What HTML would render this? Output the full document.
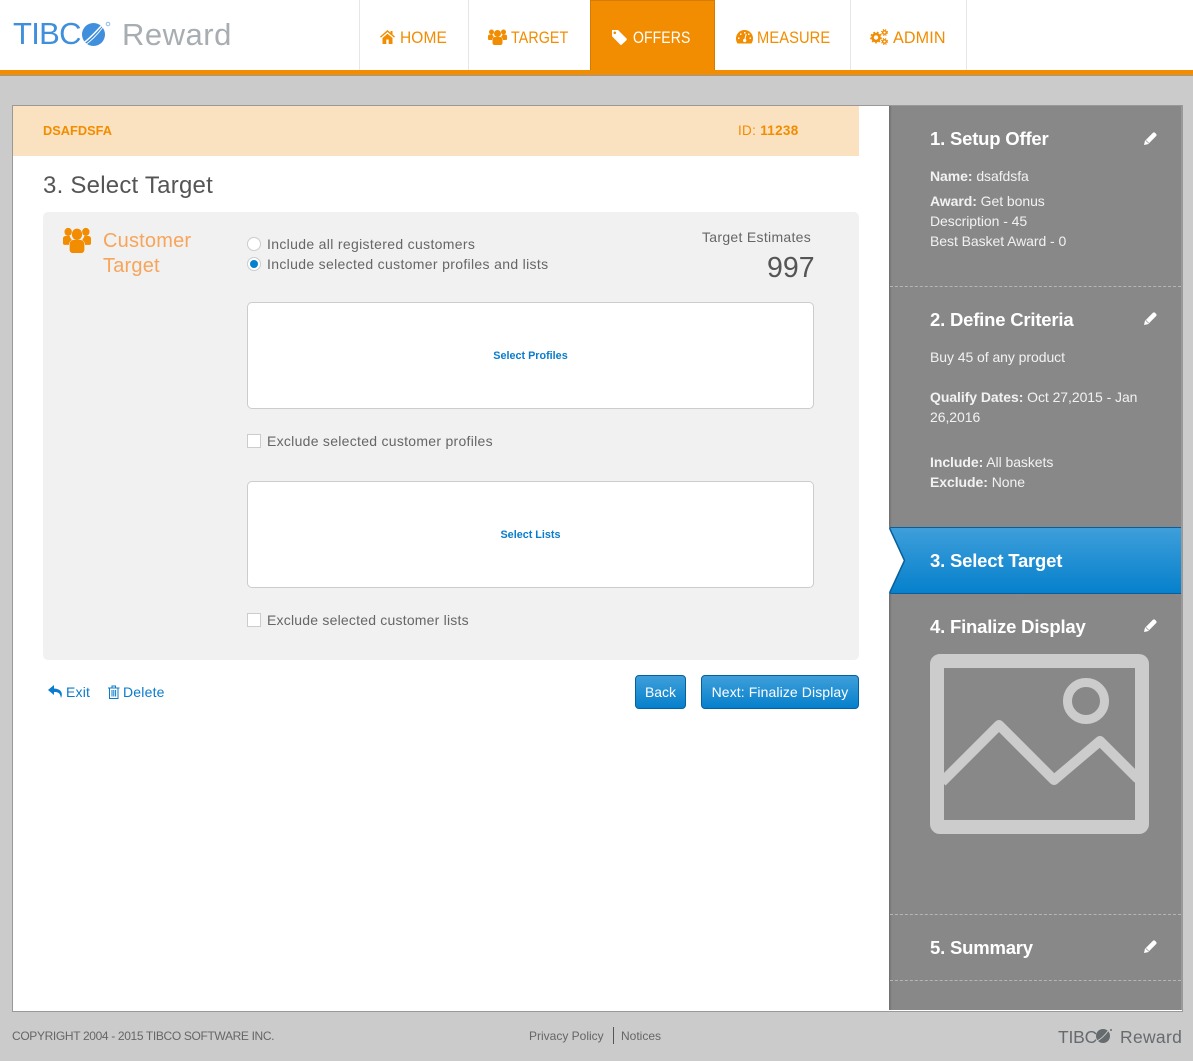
<!DOCTYPE html>
<html><head><meta charset="utf-8"><style>
html,body{margin:0;padding:0;width:1193px;height:1061px;overflow:hidden;background:#cbcbcb;font-family:"Liberation Sans",sans-serif}
.a,.t,svg{position:absolute}
.t{white-space:nowrap;line-height:20px}
.n{font-size:16.5px;color:#f28c00;top:28px;letter-spacing:.1px;transform-origin:0 50%}
.s{left:930px;font-size:14px;color:#f2f2f2;letter-spacing:-.06px}
.h{left:930px;font-size:18.5px;font-weight:bold;color:#fff;letter-spacing:-.2px}
.l{font-size:14px;color:#666;letter-spacing:.33px}
.d{left:890px;width:291px;border-top:1px dashed #b5b5b5;height:0}
.box{left:247px;width:565px;height:105px;background:#fff;border:1px solid #ccc;border-radius:5px}
.sel{font-size:10.8px;font-weight:bold;color:#0a7ccb;text-align:center;left:247px;width:567px}
.cb{left:247px;width:12px;height:12px;border:1px solid #ccc;background:#fff}
.btn{top:675px;height:32px;border:1px solid #05609f;border-radius:4px;background:linear-gradient(#3f9fda,#0580cc);color:#fff;font-size:14px;line-height:32px;text-align:center;white-space:nowrap}
.sep{top:0;width:1px;height:70px;background:#e6e6e6}
</style></head><body>
<div class="a" style="left:0;top:0;width:1193px;height:70px;background:#fff"></div>
<div class="a" style="left:0;top:70px;width:1193px;height:5px;background:#f28c00;border-bottom:1px solid #999"></div>

<div class="t" style="left:13px;top:17px;font-size:31px;line-height:34px;color:#3f8fdc;letter-spacing:-.7px">TIBC</div>
<svg style="left:76px;top:19px" width="35" height="30" viewBox="0 0 35 30"><circle cx="17.500" cy="15.500" r="11.500" fill="#3f8fdc"/><path d="M6 25C12 21 18 15 26 6" stroke="#fff" stroke-width="1.400" fill="none"/><path d="M9 26C15 22 21 16 27 8" stroke="#fff" stroke-width="1" fill="none"/><circle cx="32" cy="5" r="1.800" fill="none" stroke="#8fbce8"/></svg>
<div class="t" style="left:122px;top:17px;font-size:31px;line-height:35px;color:#a7adb0;letter-spacing:.5px">Reward</div>

<div class="a sep" style="left:359px"></div><div class="a sep" style="left:468px"></div><div class="a sep" style="left:850px"></div><div class="a sep" style="left:966px"></div>
<div class="a" style="left:590px;top:0;width:123px;height:69px;background:#f28c00;border:1px solid #d57c00;border-bottom:0"></div>

<svg style="left:380px;top:30px" width="15" height="14" viewBox="0 0 15 14"><path fill="#f28c00" d="M7.5 0L0 6.600l.9 1L7.500 2l6.600 5.600.9-1L12.500 4.400V1h-2v1.700zM2.500 8v6h3.800V9.500h2.400V14h3.800V8L7.500 3.700z"/></svg>
<div class="t n" style="left:400px;transform:scaleX(.94)">HOME</div>
<svg style="left:488px;top:29px" width="19" height="16" viewBox="0 0 19 16"><g fill="#f28c00"><circle cx="3.500" cy="3" r="2.500"/><circle cx="15.500" cy="3" r="2.500"/><circle cx="9.500" cy="4.500" r="3.500"/><path d="M0 7c0-1 1-1.500 2-1.500h2.500c.3 1 1 1.800 1.500 2.500C4.800 8.500 4 9.800 4 11H1C.4 11 0 10.500 0 10zM19 7c0-1-1-1.500-2-1.500h-2.500c-.3 1-1 1.800-1.500 2.500 1.200.5 2 1.800 2 3h3c.6 0 1-.5 1-1zM4.500 10.500C4.500 9 6 8 7 8h5c1 0 2.500 1 2.500 2.500V14c0 1-.8 2-2 2h-6c-1.200 0-2-1-2-2z"/></g></svg>
<div class="t n" style="left:511px;transform:scaleX(.864)">TARGET</div>
<svg style="left:611px;top:29px" width="18" height="16" viewBox="0 0 18 16"><path fill="#fff" d="M1 1h6l8.500 8.500a1.200 1.200 0 010 1.600L10.800 15.600a1.200 1.200 0 01-1.600 0L1 7.300zM3.800 2.500a1.300 1.300 0 100 2.600 1.300 1.300 0 000-2.600z" fill-rule="evenodd"/></svg>
<div class="t n" style="left:633px;color:#fff;transform:scaleX(.85)">OFFERS</div>
<svg style="left:736px;top:30px" width="17" height="14" viewBox="0 0 17 14"><path fill="#f28c00" fill-rule="evenodd" d="M8.500 0A8.500 8.500 0 000 8.500c0 1.800.5 3.500 1.500 5h14c1-1.500 1.500-3.200 1.500-5A8.500 8.500 0 008.500 0zM4 3.500h1.500V5H4zM8 2h1.500v1.500H8zM12 3.500h1.500V5H12zM2 7.500h1.500V9H2zM13.500 7.500H15V9h-1.500zM9.700 3.800l1 .3L9.500 9a1.700 1.700 0 11-1-.2z"/></svg>
<div class="t n" style="left:757px;transform:scaleX(.89)">MEASURE</div>
<svg style="left:870px;top:29px" width="18" height="16" viewBox="0 0 18 16"><g fill="none" stroke="#f28c00"><circle cx="6" cy="8.500" r="3.500" stroke-width="2.600"/><circle cx="6" cy="8.500" r="5.200" stroke-width="1.400" stroke-dasharray="1.800 1.800"/><circle cx="14.500" cy="3.500" r="1.800" stroke-width="1.500"/><circle cx="14.500" cy="12.500" r="1.800" stroke-width="1.500"/><circle cx="14.500" cy="3.500" r="3" stroke-width="1" stroke-dasharray="1.200 1.200"/><circle cx="14.500" cy="12.500" r="3" stroke-width="1" stroke-dasharray="1.200 1.200"/></g></svg>
<div class="t n" style="left:893px;transform:scaleX(.98)">ADMIN</div>

<div class="a" style="left:12px;top:105px;width:1169px;height:905px;background:#fff;border:1px solid #999"></div>
<div class="a" style="left:13px;top:106px;width:846px;height:50px;background:#fae2c0"></div>
<div class="t" style="left:43px;top:121px;font-size:12.800px;font-weight:bold;color:#f28c00">DSAFDSFA</div>
<div class="t" style="left:738px;top:121px;font-size:13.500px;color:#f28c00;letter-spacing:.3px">ID: <b>11238</b></div>
<div class="t" style="left:43px;top:171px;font-size:24px;line-height:30px;color:#555;letter-spacing:.23px">3. Select Target</div>

<div class="a" style="left:43px;top:212px;width:816px;height:448px;background:#f1f1f1;border-radius:5px"></div>
<svg style="left:63px;top:227px" width="28" height="26" viewBox="0 0 19 16" preserveAspectRatio="none"><g fill="#f28c00"><circle cx="3.500" cy="3" r="2.500"/><circle cx="15.500" cy="3" r="2.500"/><circle cx="9.500" cy="4.500" r="3.500"/><path d="M0 7c0-1 1-1.500 2-1.500h2.500c.3 1 1 1.800 1.500 2.500C4.800 8.500 4 9.800 4 11H1C.4 11 0 10.500 0 10zM19 7c0-1-1-1.500-2-1.500h-2.500c-.3 1-1 1.800-1.500 2.500 1.200.5 2 1.800 2 3h3c.6 0 1-.5 1-1zM4.500 10.500C4.500 9 6 8 7 8h5c1 0 2.500 1 2.500 2.500V14c0 1-.8 2-2 2h-6c-1.200 0-2-1-2-2z"/></g></svg>
<div class="t" style="left:103px;top:229px;font-size:20px;line-height:25px;color:#f7a55a;white-space:normal;width:120px;letter-spacing:.2px">Customer<br>Target</div>

<div class="a" style="left:247px;top:237px;width:12px;height:12px;border:1px solid #ccc;border-radius:50%;background:#fff"></div>
<div class="t l" style="left:267px;top:234px;letter-spacing:.33px">Include all registered customers</div>
<div class="a" style="left:247px;top:257px;width:12px;height:12px;border:1px solid #ccc;border-radius:50%;background:#fff"></div>
<div class="a" style="left:250px;top:260px;width:8px;height:8px;border-radius:50%;background:#0580cc"></div>
<div class="t l" style="left:267px;top:254px">Include selected customer profiles and lists</div>
<div class="t l" style="left:702px;top:227px;letter-spacing:.3px">Target Estimates</div>
<div class="t" style="left:767px;top:252px;font-size:28.500px;line-height:32px;color:#555">997</div>

<div class="a box" style="top:302px"></div>
<div class="t sel" style="top:346px">Select Profiles</div>
<div class="a cb" style="top:434px"></div>
<div class="t l" style="left:267px;top:431px;letter-spacing:.28px">Exclude selected customer profiles</div>
<div class="a box" style="top:481px"></div>
<div class="t sel" style="top:525px">Select Lists</div>
<div class="a cb" style="top:613px"></div>
<div class="t l" style="left:267px;top:610px;letter-spacing:.21px">Exclude selected customer lists</div>

<svg style="left:48px;top:685px" width="15" height="13" viewBox="0 0 15 13"><path fill="#0a7ccb" d="M6 0L0 5l6 5V7c4 0 6 .5 7 6 2-4 1-9-7-9.500z"/></svg>
<div class="t" style="left:66px;top:682px;font-size:14px;color:#0a7ccb;letter-spacing:.2px">Exit</div>
<svg style="left:108px;top:685px" width="12" height="14" viewBox="0 0 12 14"><g fill="none" stroke="#0a7ccb"><path d="M0 3h11.500M4 3V1h3.500v2M1.500 3v10.500h8.500V3M4 5v6.500M5.800 5v6.500M7.600 5v6.500"/></g></svg>
<div class="t" style="left:123px;top:682px;font-size:14px;color:#0a7ccb;letter-spacing:.2px">Delete</div>

<div class="a btn" style="left:635px;width:49px">Back</div>
<div class="a btn" style="left:701px;width:156px;letter-spacing:.1px">Next: Finalize Display</div>

<div class="a" style="left:889px;top:106px;width:293px;height:904px;background:#888"></div>
<div class="a" style="left:889px;top:106px;width:3px;height:904px;background:linear-gradient(90deg,#6e6e6e,#888)"></div>
<div class="a" style="left:1181px;top:106px;width:1px;height:904px;background:#999"></div>

<div class="t h" style="top:129px">1. Setup Offer</div>
<div class="t s" style="top:166px"><b>Name:</b> dsafdsfa</div>
<div class="t s" style="top:191px"><b>Award:</b> Get bonus</div>
<div class="t s" style="top:211px">Description - 45</div>
<div class="t s" style="top:231px">Best Basket Award - 0</div>
<div class="a d" style="top:286px"></div>

<div class="t h" style="top:310px">2. Define Criteria</div>
<div class="t s" style="top:347px">Buy 45 of any product</div>
<div class="t s" style="top:387px"><b>Qualify Dates:</b> Oct 27,2015 - Jan</div>
<div class="t s" style="top:407px">26,2016</div>
<div class="t s" style="top:452px"><b>Include:</b> All baskets</div>
<div class="t s" style="top:472px"><b>Exclude:</b> None</div>

<svg style="left:889px;top:527px" width="292" height="67" viewBox="0 0 292 67"><defs><linearGradient id="g" x1="0" y1="0" x2="0" y2="1"><stop offset="0" stop-color="#3f9fda"/><stop offset="1" stop-color="#0580cc"/></linearGradient></defs><rect width="292" height="67" fill="url(#g)"/><path d="M0 0h292v1H0z" fill="#0a5f99"/><path d="M0 66h292v1H0z" fill="#0a5f99"/><path d="M0 0L15.500 33.500 0 67z" fill="#fff"/><path d="M.5 1L15.500 33.500 .5 66" fill="none" stroke="#0a5f99" stroke-width="1.500"/></svg>
<div class="t h" style="top:551px">3. Select Target</div>

<div class="t h" style="top:617px">4. Finalize Display</div>
<svg style="left:930px;top:654px" width="219" height="180" viewBox="0 0 219 180"><rect x="7" y="7" width="205" height="166" rx="3" fill="none" stroke="#ccc" stroke-width="14"/><circle cx="156" cy="47" r="18.500" fill="none" stroke="#ccc" stroke-width="9"/><path d="M12 128L69 71l55 55 46-39 38 38" fill="none" stroke="#ccc" stroke-width="10" stroke-linejoin="round"/></svg>
<div class="a d" style="top:914px"></div>
<div class="t h" style="top:938px">5. Summary</div>
<div class="a d" style="top:980px"></div>

<svg style="left:1144px;top:132px" width="13" height="13" viewBox="0 0 14 14"><path fill="#fff" d="M0 14l1-4.500L9.500 1c.8-.8 1.800-.8 2.500 0l1 1c.7.700.7 1.700 0 2.500L4.500 13z"/><path d="M2 9l3 3" stroke="#888" stroke-width=".7"/></svg>
<svg style="left:1144px;top:312px" width="13" height="13" viewBox="0 0 14 14"><path fill="#fff" d="M0 14l1-4.500L9.500 1c.8-.8 1.800-.8 2.500 0l1 1c.7.700.7 1.700 0 2.500L4.500 13z"/><path d="M2 9l3 3" stroke="#888" stroke-width=".7"/></svg>
<svg style="left:1144px;top:619px" width="13" height="13" viewBox="0 0 14 14"><path fill="#fff" d="M0 14l1-4.500L9.500 1c.8-.8 1.800-.8 2.500 0l1 1c.7.700.7 1.700 0 2.500L4.500 13z"/><path d="M2 9l3 3" stroke="#888" stroke-width=".7"/></svg>
<svg style="left:1144px;top:940px" width="13" height="13" viewBox="0 0 14 14"><path fill="#fff" d="M0 14l1-4.500L9.500 1c.8-.8 1.800-.8 2.500 0l1 1c.7.700.7 1.700 0 2.500L4.500 13z"/><path d="M2 9l3 3" stroke="#888" stroke-width=".7"/></svg>

<div class="t" style="left:12px;top:1026px;font-size:12px;color:#666;letter-spacing:-.35px">COPYRIGHT 2004 - 2015 TIBCO SOFTWARE INC.</div>
<div class="t" style="left:529px;top:1026px;font-size:12px;color:#666">Privacy Policy</div>
<div class="a" style="left:613px;top:1027px;width:1px;height:17px;background:#555"></div>
<div class="t" style="left:621px;top:1026px;font-size:12px;color:#666">Notices</div>
<div class="t" style="left:1058px;top:1027px;font-size:17.500px;color:#666b6e;letter-spacing:-.2px">TIBC</div>
<svg style="left:1095px;top:1027px" width="19" height="17" viewBox="0 0 19 17"><circle cx="8" cy="9" r="7" fill="#666b6e"/><path d="M2 14C6 12 10 8 13 4" stroke="#ccc" stroke-width="1" fill="none"/><circle cx="16" cy="3" r="1" fill="#666b6e"/></svg>
<div class="t" style="left:1120px;top:1027px;font-size:17.500px;color:#666b6e;letter-spacing:.3px">Reward</div>
</body></html>
